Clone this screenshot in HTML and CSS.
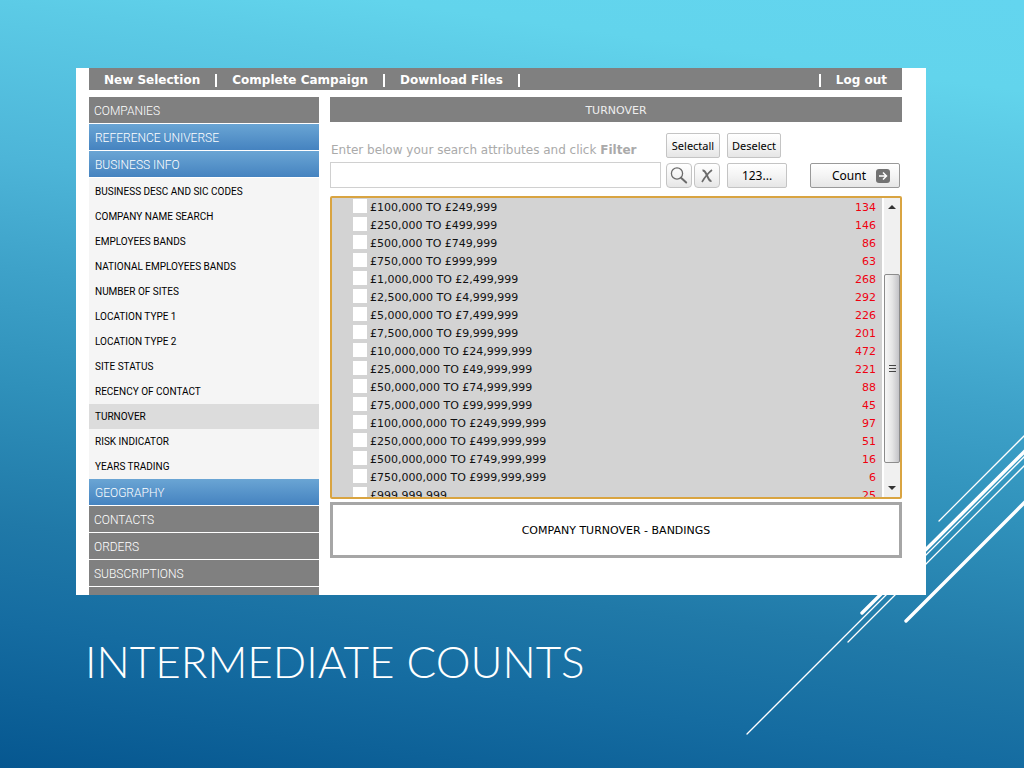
FILE: index.html
```html
<!DOCTYPE html>
<html lang="en">
<head>
<meta charset="utf-8">
<title>Intermediate Counts</title>
<link rel="stylesheet" href="styles.css">
</head>
<body>
<div class="slide">
  <svg class="streaks" width="280" height="340" viewBox="0 0 280 340" aria-hidden="true">
    <g stroke="#fff" stroke-linecap="round" fill="none">
      <path stroke-width="1.3" d="M195 93 282 6M3 306 282 27M104 214 282 36"/>
      <path stroke-width="3.4" d="M118 185 282 22M162 193 282 73"/>
    </g>
  </svg>

  <div class="app">
    <nav class="topbar">
      <a href="#">New Selection</a>
      <a href="#">Complete Campaign</a>
      <a href="#">Download Files</a>
      <a class="logout" href="#">Log out</a>
    </nav>

    <div class="columns">
      <nav class="sidebar">
        <a class="section" href="#">COMPANIES</a>
        <a class="section blue" href="#">REFERENCE UNIVERSE</a>
        <a class="section blue" href="#">BUSINESS INFO</a>
        <div class="submenu">
          <a href="#">BUSINESS DESC AND SIC CODES</a>
          <a href="#">COMPANY NAME SEARCH</a>
          <a href="#">EMPLOYEES BANDS</a>
          <a href="#">NATIONAL EMPLOYEES BANDS</a>
          <a href="#">NUMBER OF SITES</a>
          <a href="#">LOCATION TYPE 1</a>
          <a href="#">LOCATION TYPE 2</a>
          <a href="#">SITE STATUS</a>
          <a href="#">RECENCY OF CONTACT</a>
          <a class="current" href="#">TURNOVER</a>
          <a href="#">RISK INDICATOR</a>
          <a href="#">YEARS TRADING</a>
        </div>
        <a class="section blue" href="#">GEOGRAPHY</a>
        <a class="section" href="#">CONTACTS</a>
        <a class="section" href="#">ORDERS</a>
        <a class="section" href="#">SUBSCRIPTIONS</a>
        <div class="section"></div>
      </nav>

      <main class="main">
        <h2 class="heading">TURNOVER</h2>

        <form class="toolbar">
          <div class="search">
            <label for="filter">Enter below your search attributes and click <b>Filter</b></label>
            <input id="filter" type="text">
          </div>
          <div class="actions">
            <div class="action-row">
              <button class="btn small" type="button">Selectall</button>
              <button class="btn small" type="button">Deselect</button>
            </div>
            <div class="action-row">
              <div class="pair">
                <button class="btn icon" type="button" aria-label="Filter">
                  <svg width="20" height="20" viewBox="0 0 20 20" fill="none" stroke="#6b6b6b"><circle cx="8" cy="7.500" r="5.600" stroke-width="1.300"/><path d="M12 11.700 17.200 16.500" stroke-width="2" stroke-linecap="round"/></svg>
                </button>
                <button class="btn icon" type="button" aria-label="Clear">
                  <svg width="20" height="20" viewBox="0 0 20 20" fill="none" stroke="#6b6b6b"><path d="M5.500 4.500C8 4 8.500 6.500 10 9.500S12 15.500 14.500 15" stroke-width="2"/><path d="M15 4C11 7 8 11 5 16" stroke-width="1.600"/></svg>
                </button>
              </div>
              <button class="btn number" type="button">123...</button>
              <button class="btn count" type="button">Count
                <svg width="14" height="14" viewBox="0 0 14 14"><rect width="14" height="14" rx="3" fill="#727272"/><path d="M3 7H10.500M7 3.500 10.500 7 7 10.500" fill="none" stroke="#fff" stroke-width="1.500"/></svg>
              </button>
            </div>
          </div>
        </form>

        <div class="listbox">
          <ul class="bands">
            <li><label><input type="checkbox">£100,000 TO £249,999</label><span>134</span></li>
            <li><label><input type="checkbox">£250,000 TO £499,999</label><span>146</span></li>
            <li><label><input type="checkbox">£500,000 TO £749,999</label><span>86</span></li>
            <li><label><input type="checkbox">£750,000 TO £999,999</label><span>63</span></li>
            <li><label><input type="checkbox">£1,000,000 TO £2,499,999</label><span>268</span></li>
            <li><label><input type="checkbox">£2,500,000 TO £4,999,999</label><span>292</span></li>
            <li><label><input type="checkbox">£5,000,000 TO £7,499,999</label><span>226</span></li>
            <li><label><input type="checkbox">£7,500,000 TO £9,999,999</label><span>201</span></li>
            <li><label><input type="checkbox">£10,000,000 TO £24,999,999</label><span>472</span></li>
            <li><label><input type="checkbox">£25,000,000 TO £49,999,999</label><span>221</span></li>
            <li><label><input type="checkbox">£50,000,000 TO £74,999,999</label><span>88</span></li>
            <li><label><input type="checkbox">£75,000,000 TO £99,999,999</label><span>45</span></li>
            <li><label><input type="checkbox">£100,000,000 TO £249,999,999</label><span>97</span></li>
            <li><label><input type="checkbox">£250,000,000 TO £499,999,999</label><span>51</span></li>
            <li><label><input type="checkbox">£500,000,000 TO £749,999,999</label><span>16</span></li>
            <li><label><input type="checkbox">£750,000,000 TO £999,999,999</label><span>6</span></li>
            <li><label><input type="checkbox">£999,999,999</label><span>25</span></li>
          </ul>
          <div class="scrollbar">
            <svg class="arrow" width="8" height="4" viewBox="0 0 8 4"><path d="M0 4 4 0 8 4z" fill="#333"/></svg>
            <div class="thumb"><i></i><i></i><i></i></div>
            <svg class="arrow down" width="8" height="4" viewBox="0 0 8 4"><path d="M0 0h8L4 4z" fill="#333"/></svg>
          </div>
        </div>

        <p class="caption">COMPANY TURNOVER - BANDINGS</p>
      </main>
    </div>
  </div>

  <h1 class="title">INTERMEDIATE COUNTS</h1>
</div>
</body>
</html>
```
FILE: styles.css
```css
* { box-sizing: border-box; }

body { margin: 0; font-family: "DejaVu Sans", Verdana, sans-serif; }
a { color: inherit; text-decoration: none; }

.slide {
  position: relative;
  display: flex;
  flex-direction: column;
  height: 100vh;
  padding: 68px 98px 76px 76px;
  overflow: hidden;
  background: linear-gradient(188deg, #63d5ef 0%, #62d4ec 10%, #5ccbe6 16%, #4db5d8 33%, #3ea2c9 45%, #2f90ba 58%, #2079a8 73%, #156ca1 84%, #065790 100%);
}

.streaks { position: absolute; right: 0; bottom: 0; }

.app {
  position: relative;
  flex: 1;
  min-height: 0;
  overflow: hidden;
  padding: 0 24px 0 13px;
  background: #fff;
}

.topbar {
  display: flex;
  align-items: center;
  height: 22px;
  margin-bottom: 7px;
  padding-top: 3px;
  background: #808080;
  color: #fff;
  font-size: 12px;
  font-weight: bold;
  line-height: 13px;
}
.topbar a { padding: 0 15px; border-right: 2px solid #fff; white-space: nowrap; }
.topbar .logout { margin-left: auto; border-right: 0; border-left: 2px solid #fff; }

.columns { display: flex; gap: 11px; align-items: flex-start; }

.sidebar { flex: 0 0 230px; font-family: Roboto, Arial, sans-serif; }
.section {
  display: block;
  height: 26px;
  margin-bottom: 1px;
  padding-left: 5px;
  background: #808080;
  color: #fff;
  font-size: 12px;
  font-weight: 300;
  line-height: 28px;
}
.section.blue { padding-left: 6px; background: linear-gradient(#6aa5d4, #4583c0); }
.submenu { padding-top: 1px; background: #f5f5f5; }
.submenu a { display: block; padding-left: 6px; color: #000; font-size: 10px; line-height: 25px; }
.submenu .current { background: #dcdcdc; }

.main { flex: 1; min-width: 0; }

.heading {
  height: 25px;
  margin: 0 0 11px;
  background: #808080;
  color: #eee;
  font-size: 11px;
  font-weight: normal;
  line-height: 27px;
  text-align: center;
}

.toolbar { display: flex; gap: 5px; margin-bottom: 8px; }
.search { flex: 1; min-width: 0; display: flex; flex-direction: column; justify-content: flex-end; }
.search label { padding: 0 1px; color: #aaa; font-size: 12px; line-height: 24px; white-space: nowrap; }
.search input { width: 100%; height: 26px; border: 1px solid #d0d0d0; background: #fff; }

.actions { flex: 0 0 236px; display: flex; flex-direction: column; gap: 5px; }
.action-row { display: flex; gap: 7px; }
.pair { display: flex; gap: 2px; }
.btn {
  display: flex;
  align-items: center;
  justify-content: center;
  height: 25px;
  padding: 0;
  border: 1px solid #c4c4c4;
  border-radius: 2px;
  background: linear-gradient(#fff, #f4f4f4 50%, #e6e6e6);
  color: #000;
  font-family: "Noto Sans", Tahoma, sans-serif;
  font-size: 12px;
}
.small { width: 54px; font-size: 11px; }
.icon { width: 26px; border-radius: 4px; }
.number { width: 60px; }
.count { width: 90px; gap: 10px; margin: 0 2px 0 auto; padding-left: 12px; border-color: #999; }

.listbox {
  display: flex;
  height: 303px;
  overflow: hidden;
  border: 2px solid #d9a441;
  border-radius: 2px;
  background: #d3d3d3;
}
.bands { flex: 1; margin: 0; padding: 0 6px 0 21px; list-style: none; font-size: 11px; }
.bands li { display: flex; justify-content: space-between; height: 18px; line-height: 20px; }
.bands label { display: flex; gap: 3px; color: #111; }
.bands input { appearance: none; width: 14px; height: 14px; margin: 1px 0 0; background: #fff; }
.bands span { color: #f00010; }

.scrollbar {
  display: grid;
  grid-template-rows: 18px 58fr 190fr 16fr 18px;
  width: 18px;
  border-left: 2px solid #fff;
  background: #f0f0f0;
}
.arrow { grid-row: 1; align-self: center; justify-self: center; }
.arrow.down { grid-row: 5; }
.thumb {
  grid-row: 3;
  display: flex;
  flex-direction: column;
  align-items: center;
  justify-content: center;
  gap: 2px;
  border: 1px solid #8c8c8c;
  border-radius: 2px;
  background: linear-gradient(90deg, #f7f7f7, #e6e6e6 50%, #c3c3c7);
}
.thumb i { width: 7px; height: 1px; background: #444; }

.caption {
  height: 56px;
  margin: 3px 0 0;
  border: 3px solid #a6a6a6;
  font-size: 11px;
  line-height: 52px;
  text-align: center;
}

.title {
  position: relative;
  margin: 35px 0 0 9px;
  color: #fff;
  font-family: "Century Gothic", Lato, sans-serif;
  font-size: 44px;
  font-weight: 300;
  line-height: 62px;
  white-space: nowrap;
}
```
